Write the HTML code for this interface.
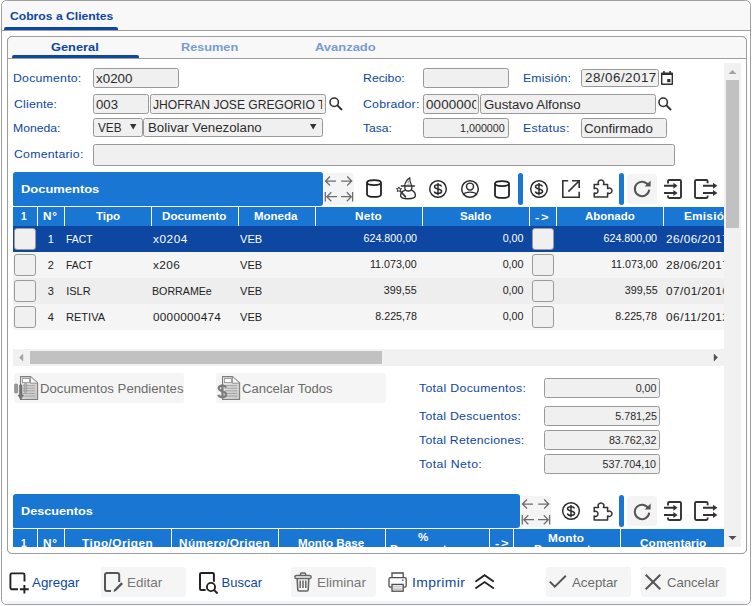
<!DOCTYPE html><html><head><meta charset="utf-8"><title>Cobros a Clientes</title><style>
html,body{margin:0;padding:0;background:#fff;}
body{width:754px;height:606px;position:relative;overflow:hidden;font-family:"Liberation Sans", sans-serif;}
div,span,svg{box-sizing:border-box;} .a{position:absolute;} svg{position:absolute;overflow:visible;}
</style></head><body>
<div class="a" style="left:1px;top:0px;width:750px;height:605px;border:1px solid #9e9e9e;border-radius:5.5px;background:#fff;"></div>
<div class="a" style="left:5px;top:601px;width:742px;height:3px;background:#f1f4f8;"></div>
<div class="a" style="left:2px;top:1px;width:748px;height:29px;background:#f8f8f8;border-radius:5px 5px 0 0;"></div>
<div class="a" style="left:2px;top:30px;width:748px;height:1px;background:#9e9e9e;"></div>
<div class="a" style="left:4px;top:27px;width:114px;height:3px;background:#0d47a1;border-radius:2px 2px 0 0;"></div>
<div class="a" style="left:7px;top:36px;width:740px;height:518px;border:1px solid #9e9e9e;border-radius:5px;background:#fff;"></div>
<div class="a" style="left:8px;top:37px;width:738px;height:21px;background:#f8f8f8;border-radius:4px 4px 0 0;"></div>
<div class="a" style="left:8px;top:58px;width:738px;height:1px;background:#9e9e9e;"></div>
<div class="a" style="left:12px;top:55px;width:127px;height:3px;background:#0d47a1;border-radius:2px 2px 0 0;"></div>
<div class="a" style="left:93px;top:68px;width:86px;height:20px;border:1px solid #999;border-radius:2.5px;background:#f0f0f0;"></div>
<div class="a" style="left:93px;top:94px;width:56px;height:20px;border:1px solid #999;border-radius:2.5px;background:#f0f0f0;"></div>
<div class="a" style="left:150px;top:94px;width:176px;height:20px;border:1px solid #999;border-radius:2.5px;background:#f0f0f0;"></div>
<div class="a" style="left:93px;top:118px;width:50px;height:19px;border:1px solid #999;border-radius:2.5px;background:#f0f0f0;"></div>
<div class="a" style="left:143px;top:118px;width:180px;height:19px;border:1px solid #999;border-radius:2.5px;background:#f0f0f0;"></div>
<div class="a" style="left:93px;top:144px;width:582px;height:22px;border:1px solid #999;border-radius:2.5px;background:#f0f0f0;"></div>
<div class="a" style="left:423px;top:68px;width:86px;height:20px;border:1px solid #999;border-radius:2.5px;background:#f0f0f0;"></div>
<div class="a" style="left:423px;top:94px;width:56px;height:20px;border:1px solid #999;border-radius:2.5px;background:#f0f0f0;"></div>
<div class="a" style="left:480px;top:94px;width:176px;height:20px;border:1px solid #999;border-radius:2.5px;background:#f0f0f0;"></div>
<div class="a" style="left:423px;top:118px;width:86px;height:20px;border:1px solid #999;border-radius:2.5px;background:#f0f0f0;"></div>
<div class="a" style="left:581px;top:69px;width:78px;height:18px;border:1px solid #999;border-radius:2.5px;background:#f0f0f0;"></div>
<div class="a" style="left:581px;top:118px;width:86px;height:20px;border:1px solid #999;border-radius:2.5px;background:#f0f0f0;"></div>
<div class="a" style="left:13px;top:172px;width:310px;height:34px;background:#1976d2;border-radius:3px 3px 3px 1px;"></div>
<div class="a" style="left:13px;top:207px;width:711px;height:19px;background:#1976d2;"></div>
<div class="a" style="left:37px;top:207px;width:1px;height:19px;background:#fff;"></div>
<div class="a" style="left:64px;top:207px;width:1px;height:19px;background:#fff;"></div>
<div class="a" style="left:151px;top:207px;width:1px;height:19px;background:#fff;"></div>
<div class="a" style="left:238px;top:207px;width:1px;height:19px;background:#fff;"></div>
<div class="a" style="left:315px;top:207px;width:1px;height:19px;background:#fff;"></div>
<div class="a" style="left:422px;top:207px;width:1px;height:19px;background:#fff;"></div>
<div class="a" style="left:529px;top:207px;width:1px;height:19px;background:#fff;"></div>
<div class="a" style="left:556px;top:207px;width:1px;height:19px;background:#fff;"></div>
<div class="a" style="left:663px;top:207px;width:1px;height:19px;background:#fff;"></div>
<div class="a" style="left:13px;top:226px;width:711px;height:26px;background:#0d47a1;"></div>
<div class="a" style="left:14px;top:228px;width:22px;height:22px;border:1px solid #9a9a9a;border-radius:3px;background:#f0f0f0;"></div>
<div class="a" style="left:532px;top:228px;width:22px;height:22px;border:1px solid #9a9a9a;border-radius:3px;background:#f0f0f0;"></div>
<div class="a" style="left:13px;top:252px;width:711px;height:26px;background:#f5f5f5;"></div>
<div class="a" style="left:14px;top:254px;width:22px;height:22px;border:1px solid #9a9a9a;border-radius:3px;background:#f0f0f0;"></div>
<div class="a" style="left:532px;top:254px;width:22px;height:22px;border:1px solid #9a9a9a;border-radius:3px;background:#f0f0f0;"></div>
<div class="a" style="left:13px;top:278px;width:711px;height:26px;background:#eeeeee;"></div>
<div class="a" style="left:14px;top:280px;width:22px;height:22px;border:1px solid #9a9a9a;border-radius:3px;background:#f0f0f0;"></div>
<div class="a" style="left:532px;top:280px;width:22px;height:22px;border:1px solid #9a9a9a;border-radius:3px;background:#f0f0f0;"></div>
<div class="a" style="left:13px;top:304px;width:711px;height:26px;background:#f5f5f5;"></div>
<div class="a" style="left:14px;top:306px;width:22px;height:22px;border:1px solid #9a9a9a;border-radius:3px;background:#f0f0f0;"></div>
<div class="a" style="left:532px;top:306px;width:22px;height:22px;border:1px solid #9a9a9a;border-radius:3px;background:#f0f0f0;"></div>
<div class="a" style="left:324px;top:173px;width:30px;height:32px;background:#f4f4f4;border-radius:3px;"></div>
<div class="a" style="left:627px;top:174px;width:30px;height:30px;background:#f4f4f4;border-radius:3px;"></div>
<div class="a" style="left:518px;top:173px;width:5px;height:32px;background:#1976d2;border-radius:2.5px;"></div>
<div class="a" style="left:619px;top:173px;width:5px;height:32px;background:#1976d2;border-radius:2.5px;"></div>
<div class="a" style="left:13px;top:349px;width:711px;height:17px;background:#f1f1f1;"></div>
<div class="a" style="left:30px;top:351px;width:352px;height:13px;background:#c1c1c1;"></div>
<div class="a" style="left:14px;top:373px;width:170px;height:30px;background:#f5f5f5;border-radius:3px;"></div>
<div class="a" style="left:216px;top:373px;width:170px;height:30px;background:#f5f5f5;border-radius:3px;"></div>
<div class="a" style="left:544px;top:378px;width:116px;height:20px;border:1px solid #999;border-radius:2.5px;background:#f0f0f0;"></div>
<div class="a" style="left:544px;top:406px;width:116px;height:20px;border:1px solid #999;border-radius:2.5px;background:#f0f0f0;"></div>
<div class="a" style="left:544px;top:430px;width:116px;height:20px;border:1px solid #999;border-radius:2.5px;background:#f0f0f0;"></div>
<div class="a" style="left:544px;top:454px;width:116px;height:20px;border:1px solid #999;border-radius:2.5px;background:#f0f0f0;"></div>
<div class="a" style="left:13px;top:494px;width:507px;height:34px;background:#1976d2;border-radius:3px 3px 3px 1px;"></div>
<div class="a" style="left:13px;top:529px;width:711px;height:18px;background:#1976d2;"></div>
<div class="a" style="left:37px;top:529px;width:1px;height:18px;background:#fff;"></div>
<div class="a" style="left:64px;top:529px;width:1px;height:18px;background:#fff;"></div>
<div class="a" style="left:171px;top:529px;width:1px;height:18px;background:#fff;"></div>
<div class="a" style="left:278px;top:529px;width:1px;height:18px;background:#fff;"></div>
<div class="a" style="left:385px;top:529px;width:1px;height:18px;background:#fff;"></div>
<div class="a" style="left:489px;top:529px;width:1px;height:18px;background:#fff;"></div>
<div class="a" style="left:513px;top:529px;width:1px;height:18px;background:#fff;"></div>
<div class="a" style="left:620px;top:529px;width:1px;height:18px;background:#fff;"></div>
<div class="a" style="left:521px;top:496px;width:30px;height:31px;background:#f4f4f4;border-radius:3px;"></div>
<div class="a" style="left:627px;top:496px;width:30px;height:30px;background:#f4f4f4;border-radius:3px;"></div>
<div class="a" style="left:619px;top:495px;width:5px;height:32px;background:#1976d2;border-radius:2.5px;"></div>
<div class="a" style="left:101px;top:567px;width:85px;height:30px;background:#f5f5f5;border-radius:3px;"></div>
<div class="a" style="left:291px;top:567px;width:85px;height:30px;background:#f5f5f5;border-radius:3px;"></div>
<div class="a" style="left:546px;top:567px;width:85px;height:30px;background:#f5f5f5;border-radius:3px;"></div>
<div class="a" style="left:641px;top:567px;width:85px;height:30px;background:#f5f5f5;border-radius:3px;"></div>
<svg style="left:324px;top:173px" width="31" height="32" viewBox="0 0 31 32"><path d="M12 8 H1.6 M6 3.5 L1.5 8 L6 12.5 M17.2 8 H27.6 M23.2 3.5 L27.7 8 L23.2 12.5 M1.3 19 V28.4 M13 23.7 H3 M7.3 19.2 L2.8 23.7 L7.3 28.2 M17 23.7 H27.2 M22.8 19.2 L27.3 23.7 L22.8 28.2 M28.6 19 V28.4" fill="none" stroke="#6c6c6c" stroke-width="1.25" stroke-linecap="butt" stroke-linejoin="miter"/></svg>
<svg style="left:366px;top:179.3px" width="16" height="19" viewBox="0 0 16 19"><path d="M1 3.6 C1 0.2 15 0.2 15 3.6 V15.4 C15 18.8 1 18.8 1 15.4 Z M1 3.6 C1 7 15 7 15 3.6" fill="none" stroke="#222" stroke-width="1.8"/></svg>
<svg style="left:396px;top:177px" width="20" height="23" viewBox="0 0 20 23"><path d="M8.6 8.8 C9.2 5.6 10.8 2.6 13.8 0.7 C13.4 3.4 14.4 6.4 15.6 8.8" fill="none" stroke="#2e2e2e" stroke-width="1.2" stroke-linejoin="round" stroke-linecap="round"/><path d="M11.6 5.4 L12.4 3.6 L12.8 6.6 M11 7.4 H13.6" fill="none" stroke="#9a9a9a" stroke-width="0.8"/><path d="M5.4 8.9 H18.4" stroke="#2e2e2e" stroke-width="1.5" stroke-linecap="round"/><path d="M8.9 9.4 V11 C8.9 12.8 10.4 14 12.3 14 C14.2 14 15.8 12.8 15.8 11 V9.4" fill="none" stroke="#2e2e2e" stroke-width="1.3"/><path d="M8.8 13.4 C6.4 14.2 4.6 16 4.6 18.6 C4.6 20.6 8 21.8 12 21.8 C16 21.8 19.4 20.6 19.4 18.6 C19.4 16 17.8 14.2 15.8 13.4" fill="none" stroke="#2e2e2e" stroke-width="1.4" stroke-linecap="round"/><path d="M4.2 14 L9.4 19.6" stroke="#2e2e2e" stroke-width="1.6" stroke-linecap="round"/><path d="M2.9 9.9 L3.6 11.7 L5.5 11.7 L4 12.9 L4.6 14.8 L2.9 13.7 L1.2 14.8 L1.8 12.9 L0.3 11.7 L2.2 11.7 Z" fill="#fff" stroke="#2e2e2e" stroke-width="0.95" stroke-linejoin="round"/></svg>
<svg style="left:427.8px;top:178.7px" width="20" height="20" viewBox="0 0 20 20"><circle cx="10" cy="10" r="8.3" fill="none" stroke="#2a2a2a" stroke-width="1.45"/><path d="M13 7.6 C12.6 6.4 11.4 5.9 10 5.9 C8.3 5.9 7.1 6.7 7.1 7.9 C7.1 9.2 8.4 9.6 10 10 C11.7 10.4 13 10.9 13 12.2 C13 13.4 11.7 14.2 10 14.2 C8.4 14.2 7.2 13.5 6.9 12.3 M10 4.3 V15.8" fill="none" stroke="#2a2a2a" stroke-width="1.45" vector-effect="non-scaling-stroke" transform="translate(10 10) scale(1.2 1.06) translate(-10 -10)"/></svg>
<svg style="left:459.8px;top:178.7px" width="20" height="20" viewBox="0 0 20 20"><circle cx="10" cy="10" r="8.3" fill="none" stroke="#2a2a2a" stroke-width="1.45"/><circle cx="10" cy="7.6" r="3.5" fill="none" stroke="#2a2a2a" stroke-width="1.45"/><path d="M3.2 15.9 C5.2 12.2 14.8 12.2 16.8 15.9" fill="none" stroke="#2a2a2a" stroke-width="1.45"/></svg>
<svg style="left:494px;top:179.5px" width="16" height="19" viewBox="0 0 16 19"><path d="M1 3.6 C1 0.2 15 0.2 15 3.6 V15.4 C15 18.8 1 18.8 1 15.4 Z M1 3.6 C1 7 15 7 15 3.6" fill="none" stroke="#222" stroke-width="1.8"/></svg>
<svg style="left:528.9px;top:178.7px" width="20" height="20" viewBox="0 0 20 20"><circle cx="10" cy="10" r="8.3" fill="none" stroke="#2a2a2a" stroke-width="1.45"/><path d="M13 7.6 C12.6 6.4 11.4 5.9 10 5.9 C8.3 5.9 7.1 6.7 7.1 7.9 C7.1 9.2 8.4 9.6 10 10 C11.7 10.4 13 10.9 13 12.2 C13 13.4 11.7 14.2 10 14.2 C8.4 14.2 7.2 13.5 6.9 12.3 M10 4.3 V15.8" fill="none" stroke="#2a2a2a" stroke-width="1.45" vector-effect="non-scaling-stroke" transform="translate(10 10) scale(1.2 1.06) translate(-10 -10)"/></svg>
<svg style="left:562px;top:179.8px" width="18" height="18" viewBox="0 0 18 18"><path d="M6.2 0.8 H0.8 V17.2 H17.2 V11.8 M10 0.8 H17.2 V8 M17 1 L6.4 11.6" fill="none" stroke="#333" stroke-width="1.6"/></svg>
<svg style="left:593px;top:178.9px" width="20" height="19" viewBox="0 0 20 19"><path d="M1.2 5.6 H5.6 C4.4 3.4 5.6 0.9 8 0.9 C10.4 0.9 11.6 3.4 10.4 5.6 H14.6 V9.6 C16.6 8.4 19 9.6 19 11.8 C19 14 16.6 15.2 14.6 14 V18 H1.2 V14 C3.4 15 5 13.8 5 11.8 C5 9.8 3.4 8.6 1.2 9.6 Z" fill="none" stroke="#333" stroke-width="1.5" stroke-linejoin="round"/></svg>
<svg style="left:631.8px;top:179.2px" width="20" height="20" viewBox="0 0 20 20"><path d="M16.2 6.2 A7.2 7.2 0 1 0 17.2 10.6" fill="none" stroke="#555" stroke-width="2"/><path d="M18.6 1.6 V7.6 H12.6 Z" fill="#555"/></svg>
<svg style="left:663.8px;top:178.8px" width="18" height="20" viewBox="0 0 18 20"><path d="M4 4.6 V2.2 Q4 1 5.2 1 H15.8 Q17 1 17 2.2 V17.8 Q17 19 15.8 19 H5.2 Q4 19 4 17.8 V16.4" fill="none" stroke="#333" stroke-width="1.9"/><path d="M0 6.8 H10 M0 14 H10" stroke="#333" stroke-width="1.9"/><path d="M9.4 3.8 L13.6 6.8 L9.4 9.8 Z M9.4 11 L13.6 14 L9.4 17 Z" fill="#333"/></svg>
<svg style="left:694.2px;top:178.8px" width="24" height="20" viewBox="0 0 24 20"><path d="M13.6 4.2 V2.2 Q13.6 1 12.4 1 H2.2 Q1 1 1 2.2 V17.8 Q1 19 2.2 19 H12.4 Q13.6 19 13.6 17.8 V16.6" fill="none" stroke="#333" stroke-width="1.9"/><path d="M9 6.8 H20 M9 14 H20" stroke="#333" stroke-width="1.9"/><path d="M19 3.8 L23.4 6.8 L19 9.8 Z M19 11 L23.4 14 L19 17 Z" fill="#333"/></svg>
<svg style="left:521px;top:495.5px" width="31" height="32" viewBox="0 0 31 32"><path d="M12 8 H1.6 M6 3.5 L1.5 8 L6 12.5 M17.2 8 H27.6 M23.2 3.5 L27.7 8 L23.2 12.5 M1.3 19 V28.4 M13 23.7 H3 M7.3 19.2 L2.8 23.7 L7.3 28.2 M17 23.7 H27.2 M22.8 19.2 L27.3 23.7 L22.8 28.2 M28.6 19 V28.4" fill="none" stroke="#6c6c6c" stroke-width="1.25" stroke-linecap="butt" stroke-linejoin="miter"/></svg>
<svg style="left:560.7px;top:501.2px" width="20" height="20" viewBox="0 0 20 20"><circle cx="10" cy="10" r="8.3" fill="none" stroke="#2a2a2a" stroke-width="1.45"/><path d="M13 7.6 C12.6 6.4 11.4 5.9 10 5.9 C8.3 5.9 7.1 6.7 7.1 7.9 C7.1 9.2 8.4 9.6 10 10 C11.7 10.4 13 10.9 13 12.2 C13 13.4 11.7 14.2 10 14.2 C8.4 14.2 7.2 13.5 6.9 12.3 M10 4.3 V15.8" fill="none" stroke="#2a2a2a" stroke-width="1.45" vector-effect="non-scaling-stroke" transform="translate(10 10) scale(1.2 1.06) translate(-10 -10)"/></svg>
<svg style="left:593px;top:501.5px" width="20" height="19" viewBox="0 0 20 19"><path d="M1.2 5.6 H5.6 C4.4 3.4 5.6 0.9 8 0.9 C10.4 0.9 11.6 3.4 10.4 5.6 H14.6 V9.6 C16.6 8.4 19 9.6 19 11.8 C19 14 16.6 15.2 14.6 14 V18 H1.2 V14 C3.4 15 5 13.8 5 11.8 C5 9.8 3.4 8.6 1.2 9.6 Z" fill="none" stroke="#333" stroke-width="1.5" stroke-linejoin="round"/></svg>
<svg style="left:631.8px;top:501.6px" width="20" height="20" viewBox="0 0 20 20"><path d="M16.2 6.2 A7.2 7.2 0 1 0 17.2 10.6" fill="none" stroke="#555" stroke-width="2"/><path d="M18.6 1.6 V7.6 H12.6 Z" fill="#555"/></svg>
<svg style="left:663.8px;top:501.2px" width="18" height="20" viewBox="0 0 18 20"><path d="M4 4.6 V2.2 Q4 1 5.2 1 H15.8 Q17 1 17 2.2 V17.8 Q17 19 15.8 19 H5.2 Q4 19 4 17.8 V16.4" fill="none" stroke="#333" stroke-width="1.9"/><path d="M0 6.8 H10 M0 14 H10" stroke="#333" stroke-width="1.9"/><path d="M9.4 3.8 L13.6 6.8 L9.4 9.8 Z M9.4 11 L13.6 14 L9.4 17 Z" fill="#333"/></svg>
<svg style="left:694.2px;top:501.2px" width="24" height="20" viewBox="0 0 24 20"><path d="M13.6 4.2 V2.2 Q13.6 1 12.4 1 H2.2 Q1 1 1 2.2 V17.8 Q1 19 2.2 19 H12.4 Q13.6 19 13.6 17.8 V16.6" fill="none" stroke="#333" stroke-width="1.9"/><path d="M9 6.8 H20 M9 14 H20" stroke="#333" stroke-width="1.9"/><path d="M19 3.8 L23.4 6.8 L19 9.8 Z M19 11 L23.4 14 L19 17 Z" fill="#333"/></svg>
<svg style="left:328.6px;top:97.4px" width="14" height="14" viewBox="0 0 14 14"><circle cx="5.2" cy="5.2" r="4.2" fill="none" stroke="#2e2e2e" stroke-width="1.55"/><path d="M8.2 8.2 L13 13" stroke="#2e2e2e" stroke-width="1.9"/></svg>
<svg style="left:658.4px;top:97.4px" width="14" height="14" viewBox="0 0 14 14"><circle cx="5.2" cy="5.2" r="4.2" fill="none" stroke="#2e2e2e" stroke-width="1.55"/><path d="M8.2 8.2 L13 13" stroke="#2e2e2e" stroke-width="1.9"/></svg>
<svg style="left:661px;top:71.4px" width="12" height="14" viewBox="0 0 12 14"><path d="M0 2.2 Q0 1.4 0.8 1.4 H11.2 Q12 1.4 12 2.2 V13.2 Q12 14 11.2 14 H0.8 Q0 14 0 13.2 Z M1.4 4.1 V12.6 H10.6 V4.1 Z" fill="#303030" fill-rule="evenodd"/><rect x="2.2" y="0" width="1.5" height="2.4" fill="#303030"/><rect x="8.3" y="0" width="1.5" height="2.4" fill="#303030"/><rect x="6.2" y="8" width="3.2" height="3.2" fill="#303030"/></svg>
<svg style="left:129.8px;top:124.2px" width="6.4" height="5.6" viewBox="0 0 6.4 5.6"><path d="M0 0 H6.4 L3.2 5.6 Z" fill="#333"/></svg>
<svg style="left:309.8px;top:124.2px" width="6.4" height="5.6" viewBox="0 0 6.4 5.6"><path d="M0 0 H6.4 L3.2 5.6 Z" fill="#333"/></svg>
<svg style="left:13px;top:349px" width="17" height="17" viewBox="0 0 17 17"><path d="M10.2 4.6 L6.2 8.5 L10.2 12.4 Z" fill="#a3a3a3"/></svg>
<svg style="left:707px;top:349px" width="17" height="17" viewBox="0 0 17 17"><path d="M6.8 4.6 L10.8 8.5 L6.8 12.4 Z" fill="#505050"/></svg>
<svg style="left:13.6px;top:376px" width="24" height="24" viewBox="0 0 24 24"><defs><linearGradient id="pgp" x1="0" y1="0" x2="1" y2="1"><stop offset="0" stop-color="#ececec"/><stop offset="1" stop-color="#c4c4c4"/></linearGradient></defs><path d="M6.5 0.6 H16.6 L23.6 7 V23.5 H6.5 Z" fill="url(#pgp)" stroke="#7d7d7d" stroke-width="1.1" stroke-linejoin="round"/><path d="M16.4 0.8 V7.2 H23.4" fill="#f4f4f4" stroke="#8a8a8a" stroke-width="0.9"/><rect x="8.4" y="2.6" width="7" height="4" fill="#fff" stroke="#8c8c8c" stroke-width="0.8"/><path d="M9 9.6 H21 M9 12.2 H21 M9 14.8 H21 M9 17.4 H21 M9 20 H21" stroke="#a0a0a0" stroke-width="1"/><rect x="0.6" y="8" width="3" height="9" rx="1" fill="#9a9a9a" stroke="#777" stroke-width="0.6"/><path d="M5.4 9.6 Q5.4 8.8 6.2 8.8 H7.2 Q8 8.8 8 9.6 V19 H9.4 L6.7 23.6 L4 19 H5.4 Z" fill="#777" stroke="#5f5f5f" stroke-width="0.5"/><rect x="10.2" y="7.4" width="2.6" height="9" rx="1" fill="#b5b5b5" stroke="#888" stroke-width="0.6"/></svg>
<svg style="left:215.7px;top:376px" width="24" height="24" viewBox="0 0 24 24"><defs><linearGradient id="pgc" x1="0" y1="0" x2="1" y2="1"><stop offset="0" stop-color="#ececec"/><stop offset="1" stop-color="#c4c4c4"/></linearGradient></defs><path d="M6.5 0.6 H16.6 L23.6 7 V23.5 H6.5 Z" fill="url(#pgc)" stroke="#7d7d7d" stroke-width="1.1" stroke-linejoin="round"/><path d="M16.4 0.8 V7.2 H23.4" fill="#f4f4f4" stroke="#8a8a8a" stroke-width="0.9"/><rect x="8.4" y="2.6" width="7" height="4" fill="#fff" stroke="#8c8c8c" stroke-width="0.8"/><path d="M9 9.6 H21 M9 12.2 H21 M9 14.8 H21 M9 17.4 H21 M9 20 H21" stroke="#a0a0a0" stroke-width="1"/><path d="M10 11.6 C9.4 10.2 8 9.6 6.4 9.6 C4 9.6 2.7 10.7 2.7 12.3 C2.7 14 4.4 14.6 6.4 15.2 C8.6 15.8 10.1 16.6 10.1 18.4 C10.1 20.1 8.6 21.1 6.4 21.1 C4.2 21.1 2.8 20.3 2.3 18.9 M6.4 8.2 V22.6" fill="none" stroke="#7c7c7c" stroke-width="2.2"/></svg>
<svg style="left:8.6px;top:572px" width="21" height="23" viewBox="0 0 21 23"><path d="M9 17.2 H2.8 Q1.4 17.2 1.4 15.8 V2.8 Q1.4 1.4 2.8 1.4 H14.1 Q15.5 1.4 15.5 2.8 V9.4" fill="none" stroke="#222" stroke-width="1.9"/><path d="M10.9 17.2 H19.7 M15.4 13 V21.5" stroke="#222" stroke-width="1.9"/></svg>
<svg style="left:104px;top:572px" width="20" height="22" viewBox="0 0 20 22"><path d="M7 19.1 H3 Q1 19.1 1 17.1 V3 Q1 1 3 1 H13.2 Q15.2 1 15.2 3 V10" fill="none" stroke="#555" stroke-width="2"/><path d="M9.5 19.9 L10.2 17.4 L17.3 10.3 L19 12 L11.9 19.1 Z" fill="#555"/></svg>
<svg style="left:199px;top:572px" width="20" height="23" viewBox="0 0 20 23"><path d="M6.6 17.9 H2.2 Q1 17.9 1 16.7 V2.2 Q1 1 2.2 1 H13.7 Q14.9 1 14.9 2.2 V9.7" fill="none" stroke="#222" stroke-width="2"/><circle cx="12" cy="15" r="4.1" fill="none" stroke="#222" stroke-width="1.9"/><path d="M15 18 L18.6 21.4" stroke="#222" stroke-width="2"/></svg>
<svg style="left:294px;top:572.2px" width="18" height="20" viewBox="0 0 18 20"><rect x="0.9" y="3.4" width="16.2" height="3.2" rx="1.6" fill="none" stroke="#666" stroke-width="1.5"/><path d="M6.4 3.2 V2 Q6.4 0.9 7.5 0.9 H10.5 Q11.6 0.9 11.6 2 V3.2" fill="none" stroke="#666" stroke-width="1.5"/><path d="M3.2 6.8 L3.8 17.8 Q3.9 19 5.1 19 H12.9 Q14.1 19 14.2 17.8 L14.8 6.8" fill="none" stroke="#666" stroke-width="1.6"/><path d="M6.2 8.6 V16 M9 8.6 V16 M11.8 8.6 V16" stroke="#666" stroke-width="1.5"/></svg>
<svg style="left:388.4px;top:572px" width="19" height="20" viewBox="0 0 19 20"><path d="M4 5.4 V1 H15.2 V5.4" fill="none" stroke="#4d4d4d" stroke-width="1.3"/><path d="M3.8 15.2 H2.6 Q1 15.2 1 13.6 V7.2 Q1 5.6 2.6 5.6 H16.6 Q18.2 5.6 18.2 7.2 V13.6 Q18.2 15.2 16.6 15.2 H15.4" fill="none" stroke="#4d4d4d" stroke-width="1.3"/><rect x="4" y="12.4" width="11.2" height="6.8" fill="#f1f1f1" stroke="#4d4d4d" stroke-width="1.3"/><path d="M5 14.6 H14.2 M5 16.2 H14.2 M5 17.6 H14.2" stroke="#c4c4c4" stroke-width="0.9"/><rect x="14.2" y="7.4" width="1.2" height="1.6" fill="#4d4d4d"/></svg>
<svg style="left:474.6px;top:574.4px" width="19" height="15" viewBox="0 0 19 15"><path d="M1 7.2 L9.6 1.2 L18.2 7.2 M1 14 L9.6 8 L18.2 14" fill="none" stroke="#222" stroke-width="1.8" stroke-linecap="round" stroke-linejoin="miter"/></svg>
<svg style="left:549.2px;top:575.2px" width="18" height="13" viewBox="0 0 18 13"><path d="M0.8 6.6 L5.8 11.6 L16.8 0.8" fill="none" stroke="#555" stroke-width="2"/></svg>
<svg style="left:645.2px;top:574.2px" width="16" height="16" viewBox="0 0 16 16"><path d="M0.7 0.7 L15.3 15.3 M15.3 0.7 L0.7 15.3" fill="none" stroke="#555" stroke-width="2"/></svg>
<span style="position:absolute;white-space:pre;line-height:11.3px;font-size:11.3px;color:#0d47a1;top:11.23px;font-weight:bold;letter-spacing:0.000px;left:9.80px;transform-origin:0 50%;transform:scaleX(1.0755);">Cobros a Clientes</span>
<span style="position:absolute;white-space:pre;line-height:11.3px;font-size:11.3px;color:#0d47a1;top:41.83px;font-weight:bold;letter-spacing:0.000px;left:51.40px;transform-origin:0 50%;transform:scaleX(1.1336);">General</span>
<span style="position:absolute;white-space:pre;line-height:11.3px;font-size:11.3px;color:#789cd3;top:41.83px;font-weight:bold;letter-spacing:0.000px;left:180.60px;transform-origin:0 50%;transform:scaleX(1.1247);">Resumen</span>
<span style="position:absolute;white-space:pre;line-height:11.3px;font-size:11.3px;color:#789cd3;top:41.83px;font-weight:bold;letter-spacing:0.000px;left:314.60px;transform-origin:0 50%;transform:scaleX(1.1466);">Avanzado</span>
<span style="position:absolute;white-space:pre;line-height:11.5px;font-size:11.5px;color:#0d47a1;top:72.87px;letter-spacing:0.202px;left:13.20px;transform-origin:0 50%;transform:scaleX(1.0700);">Documento:</span>
<span style="position:absolute;white-space:pre;line-height:11.5px;font-size:11.5px;color:#0d47a1;top:99.17px;letter-spacing:0.170px;left:13.80px;transform-origin:0 50%;transform:scaleX(1.0700);">Cliente:</span>
<span style="position:absolute;white-space:pre;line-height:11.5px;font-size:11.5px;color:#0d47a1;top:123.07px;letter-spacing:0.000px;left:13.20px;transform-origin:0 50%;transform:scaleX(1.0611);">Moneda:</span>
<span style="position:absolute;white-space:pre;line-height:11.5px;font-size:11.5px;color:#0d47a1;top:149.47px;letter-spacing:0.213px;left:13.80px;transform-origin:0 50%;transform:scaleX(1.0700);">Comentario:</span>
<span style="position:absolute;white-space:pre;line-height:11.5px;font-size:11.5px;color:#0d47a1;top:72.87px;letter-spacing:0.000px;left:362.60px;transform-origin:0 50%;transform:scaleX(1.0692);">Recibo:</span>
<span style="position:absolute;white-space:pre;line-height:11.5px;font-size:11.5px;color:#0d47a1;top:99.17px;letter-spacing:0.185px;left:363.20px;transform-origin:0 50%;transform:scaleX(1.0700);">Cobrador:</span>
<span style="position:absolute;white-space:pre;line-height:11.5px;font-size:11.5px;color:#0d47a1;top:123.07px;letter-spacing:0.000px;left:363.20px;transform-origin:0 50%;transform:scaleX(1.0509);">Tasa:</span>
<span style="position:absolute;white-space:pre;line-height:11.5px;font-size:11.5px;color:#0d47a1;top:72.87px;letter-spacing:0.107px;left:522.80px;transform-origin:0 50%;transform:scaleX(1.0700);">Emisión:</span>
<span style="position:absolute;white-space:pre;line-height:11.5px;font-size:11.5px;color:#0d47a1;top:123.07px;letter-spacing:0.257px;left:522.80px;transform-origin:0 50%;transform:scaleX(1.0700);">Estatus:</span>
<span style="position:absolute;white-space:pre;line-height:12.5px;font-size:12.5px;color:#2b2b2b;top:72.82px;letter-spacing:0.012px;left:96.40px;transform-origin:0 50%;transform:scaleX(1.0700);">x0200</span>
<span style="position:absolute;white-space:pre;line-height:12.5px;font-size:12.5px;color:#2b2b2b;top:98.82px;letter-spacing:0.000px;left:96.40px;transform-origin:0 50%;transform:scaleX(1.0547);">003</span>
<span style="position:absolute;white-space:pre;line-height:12.5px;font-size:12.5px;color:#2b2b2b;top:98.82px;letter-spacing:0.000px;left:153.30px;transform-origin:0 50%;transform:scaleX(0.9666);width:175.36px;overflow:hidden;">JHOFRAN JOSE GREGORIO TORRES</span>
<span style="position:absolute;white-space:pre;line-height:12.5px;font-size:12.5px;color:#2b2b2b;top:121.82px;letter-spacing:0.000px;left:98.00px;transform-origin:0 50%;transform:scaleX(0.9434);">VEB</span>
<span style="position:absolute;white-space:pre;line-height:12.5px;font-size:12.5px;color:#2b2b2b;top:121.82px;letter-spacing:0.000px;left:147.80px;transform-origin:0 50%;transform:scaleX(1.0623);">Bolivar Venezolano</span>
<span style="position:absolute;white-space:pre;line-height:12.5px;font-size:12.5px;color:#2b2b2b;top:98.82px;letter-spacing:0.125px;left:426.10px;transform-origin:0 50%;transform:scaleX(1.0700);width:47.38px;overflow:hidden;">0000000001</span>
<span style="position:absolute;white-space:pre;line-height:12.5px;font-size:12.5px;color:#2b2b2b;top:98.82px;letter-spacing:0.000px;left:483.60px;transform-origin:0 50%;transform:scaleX(1.0601);">Gustavo Alfonso</span>
<span style="position:absolute;white-space:pre;line-height:10px;font-size:10px;color:#2b2b2b;top:123.53px;letter-spacing:0.000px;right:249.00px;transform-origin:100% 50%;transform:scaleX(1.0700);">1,000000</span>
<span style="position:absolute;white-space:pre;line-height:12.5px;font-size:12.5px;color:#2b2b2b;top:72.42px;letter-spacing:0.453px;left:584.80px;transform-origin:0 50%;transform:scaleX(1.0700);">28/06/2017</span>
<span style="position:absolute;white-space:pre;line-height:12.5px;font-size:12.5px;color:#2b2b2b;top:122.62px;letter-spacing:0.000px;left:584.20px;transform-origin:0 50%;transform:scaleX(1.0662);">Confirmado</span>
<span style="position:absolute;white-space:pre;line-height:11.3px;font-size:11.3px;color:#fff;top:183.63px;font-weight:bold;letter-spacing:0.000px;left:20.70px;transform-origin:0 50%;transform:scaleX(1.1444);">Documentos</span>
<span style="position:absolute;white-space:pre;line-height:10px;font-size:10px;color:#fff;top:212.34px;font-weight:bold;letter-spacing:0.000px;left:20.50px;transform-origin:0 50%;transform:scaleX(1.0067);">1</span>
<span style="position:absolute;white-space:pre;line-height:10px;font-size:10px;color:#fff;top:212.34px;font-weight:bold;letter-spacing:0.715px;left:42.80px;transform-origin:0 50%;transform:scaleX(1.1800);">N°</span>
<span style="position:absolute;white-space:pre;line-height:10px;font-size:10px;color:#fff;top:212.34px;font-weight:bold;letter-spacing:0.000px;left:95.50px;transform-origin:0 50%;transform:scaleX(1.1558);">Tipo</span>
<span style="position:absolute;white-space:pre;line-height:10px;font-size:10px;color:#fff;top:212.34px;font-weight:bold;letter-spacing:0.000px;left:161.70px;transform-origin:0 50%;transform:scaleX(1.1709);">Documento</span>
<span style="position:absolute;white-space:pre;line-height:10px;font-size:10px;color:#fff;top:212.34px;font-weight:bold;letter-spacing:0.000px;left:254.00px;transform-origin:0 50%;transform:scaleX(1.1487);">Moneda</span>
<span style="position:absolute;white-space:pre;line-height:10px;font-size:10px;color:#fff;top:212.34px;font-weight:bold;letter-spacing:0.131px;left:354.80px;transform-origin:0 50%;transform:scaleX(1.1800);">Neto</span>
<span style="position:absolute;white-space:pre;line-height:10px;font-size:10px;color:#fff;top:212.34px;font-weight:bold;letter-spacing:0.000px;left:459.80px;transform-origin:0 50%;transform:scaleX(1.1493);">Saldo</span>
<span style="position:absolute;white-space:pre;line-height:11px;font-size:11px;color:#fff;top:211.69px;font-weight:bold;letter-spacing:1.516px;left:535.40px;transform-origin:0 50%;transform:scaleX(1.1800);">-&gt;</span>
<span style="position:absolute;white-space:pre;line-height:10px;font-size:10px;color:#fff;top:212.34px;font-weight:bold;letter-spacing:0.000px;left:584.70px;transform-origin:0 50%;transform:scaleX(1.1471);">Abonado</span>
<span style="position:absolute;white-space:pre;line-height:10px;font-size:10px;color:#fff;top:212.34px;font-weight:bold;letter-spacing:0.196px;left:683.50px;transform-origin:0 50%;transform:scaleX(1.1800);width:33.64px;overflow:hidden;">Emisión</span>
<span style="position:absolute;white-space:pre;line-height:11px;font-size:11px;color:#fff;top:234.29px;letter-spacing:0.000px;left:47.80px;transform-origin:0 50%;">1</span>
<span style="position:absolute;white-space:pre;line-height:11px;font-size:11px;color:#fff;top:234.29px;letter-spacing:0.000px;left:66.20px;transform-origin:0 50%;transform:scaleX(0.9422);">FACT</span>
<span style="position:absolute;white-space:pre;line-height:11px;font-size:11px;color:#fff;top:234.29px;letter-spacing:0.518px;left:152.80px;transform-origin:0 50%;transform:scaleX(1.0700);">x0204</span>
<span style="position:absolute;white-space:pre;line-height:11px;font-size:11px;color:#fff;top:234.29px;letter-spacing:0.000px;left:239.80px;transform-origin:0 50%;transform:scaleX(1.0084);">VEB</span>
<span style="position:absolute;white-space:pre;line-height:10px;font-size:10px;color:#fff;top:233.53px;letter-spacing:0.000px;right:337.30px;transform-origin:100% 50%;transform:scaleX(1.0700);">624.800,00</span>
<span style="position:absolute;white-space:pre;line-height:10px;font-size:10px;color:#fff;top:233.53px;letter-spacing:0.000px;right:230.60px;transform-origin:100% 50%;transform:scaleX(1.0700);">0,00</span>
<span style="position:absolute;white-space:pre;line-height:10px;font-size:10px;color:#fff;top:233.53px;letter-spacing:0.000px;right:96.60px;transform-origin:100% 50%;transform:scaleX(1.0700);">624.800,00</span>
<span style="position:absolute;white-space:pre;line-height:11px;font-size:11px;color:#fff;top:234.29px;letter-spacing:0.402px;left:665.50px;transform-origin:0 50%;transform:scaleX(1.0700);width:54.49px;overflow:hidden;">26/06/2017</span>
<span style="position:absolute;white-space:pre;line-height:11px;font-size:11px;color:#222;top:260.29px;letter-spacing:0.000px;left:47.80px;transform-origin:0 50%;">2</span>
<span style="position:absolute;white-space:pre;line-height:11px;font-size:11px;color:#222;top:260.29px;letter-spacing:0.000px;left:66.20px;transform-origin:0 50%;transform:scaleX(0.9422);">FACT</span>
<span style="position:absolute;white-space:pre;line-height:11px;font-size:11px;color:#222;top:260.29px;letter-spacing:0.365px;left:152.80px;transform-origin:0 50%;transform:scaleX(1.0700);">x206</span>
<span style="position:absolute;white-space:pre;line-height:11px;font-size:11px;color:#222;top:260.29px;letter-spacing:0.000px;left:239.80px;transform-origin:0 50%;transform:scaleX(1.0084);">VEB</span>
<span style="position:absolute;white-space:pre;line-height:10px;font-size:10px;color:#222;top:259.54px;letter-spacing:0.000px;right:337.30px;transform-origin:100% 50%;transform:scaleX(1.0700);">11.073,00</span>
<span style="position:absolute;white-space:pre;line-height:10px;font-size:10px;color:#222;top:259.54px;letter-spacing:0.000px;right:230.60px;transform-origin:100% 50%;transform:scaleX(1.0700);">0,00</span>
<span style="position:absolute;white-space:pre;line-height:10px;font-size:10px;color:#222;top:259.54px;letter-spacing:0.000px;right:96.60px;transform-origin:100% 50%;transform:scaleX(1.0700);">11.073,00</span>
<span style="position:absolute;white-space:pre;line-height:11px;font-size:11px;color:#222;top:260.29px;letter-spacing:0.402px;left:665.50px;transform-origin:0 50%;transform:scaleX(1.0700);width:54.49px;overflow:hidden;">28/06/2017</span>
<span style="position:absolute;white-space:pre;line-height:11px;font-size:11px;color:#222;top:286.29px;letter-spacing:0.000px;left:47.80px;transform-origin:0 50%;">3</span>
<span style="position:absolute;white-space:pre;line-height:11px;font-size:11px;color:#222;top:286.29px;letter-spacing:0.000px;left:66.20px;transform-origin:0 50%;">ISLR</span>
<span style="position:absolute;white-space:pre;line-height:11px;font-size:11px;color:#222;top:286.29px;letter-spacing:0.000px;left:152.20px;transform-origin:0 50%;transform:scaleX(0.9684);">BORRAMEe</span>
<span style="position:absolute;white-space:pre;line-height:11px;font-size:11px;color:#222;top:286.29px;letter-spacing:0.000px;left:239.80px;transform-origin:0 50%;transform:scaleX(1.0084);">VEB</span>
<span style="position:absolute;white-space:pre;line-height:10px;font-size:10px;color:#222;top:285.54px;letter-spacing:0.000px;right:337.30px;transform-origin:100% 50%;transform:scaleX(1.0700);">399,55</span>
<span style="position:absolute;white-space:pre;line-height:10px;font-size:10px;color:#222;top:285.54px;letter-spacing:0.000px;right:230.60px;transform-origin:100% 50%;transform:scaleX(1.0700);">0,00</span>
<span style="position:absolute;white-space:pre;line-height:10px;font-size:10px;color:#222;top:285.54px;letter-spacing:0.000px;right:96.60px;transform-origin:100% 50%;transform:scaleX(1.0700);">399,55</span>
<span style="position:absolute;white-space:pre;line-height:11px;font-size:11px;color:#222;top:286.29px;letter-spacing:0.402px;left:665.50px;transform-origin:0 50%;transform:scaleX(1.0700);width:54.49px;overflow:hidden;">07/01/2016</span>
<span style="position:absolute;white-space:pre;line-height:11px;font-size:11px;color:#222;top:312.29px;letter-spacing:0.000px;left:47.80px;transform-origin:0 50%;">4</span>
<span style="position:absolute;white-space:pre;line-height:11px;font-size:11px;color:#222;top:312.29px;letter-spacing:0.000px;left:66.20px;transform-origin:0 50%;transform:scaleX(1.0046);">RETIVA</span>
<span style="position:absolute;white-space:pre;line-height:11px;font-size:11px;color:#222;top:312.29px;letter-spacing:0.242px;left:152.80px;transform-origin:0 50%;transform:scaleX(1.0700);">0000000474</span>
<span style="position:absolute;white-space:pre;line-height:11px;font-size:11px;color:#222;top:312.29px;letter-spacing:0.000px;left:239.80px;transform-origin:0 50%;transform:scaleX(1.0084);">VEB</span>
<span style="position:absolute;white-space:pre;line-height:10px;font-size:10px;color:#222;top:311.54px;letter-spacing:0.000px;right:337.30px;transform-origin:100% 50%;transform:scaleX(1.0700);">8.225,78</span>
<span style="position:absolute;white-space:pre;line-height:10px;font-size:10px;color:#222;top:311.54px;letter-spacing:0.000px;right:230.60px;transform-origin:100% 50%;transform:scaleX(1.0700);">0,00</span>
<span style="position:absolute;white-space:pre;line-height:10px;font-size:10px;color:#222;top:311.54px;letter-spacing:0.000px;right:96.60px;transform-origin:100% 50%;transform:scaleX(1.0700);">8.225,78</span>
<span style="position:absolute;white-space:pre;line-height:11px;font-size:11px;color:#222;top:312.29px;letter-spacing:0.503px;left:665.50px;transform-origin:0 50%;transform:scaleX(1.0700);width:54.49px;overflow:hidden;">06/11/2012</span>
<span style="position:absolute;white-space:pre;line-height:12.5px;font-size:12.5px;color:#6b6b6b;top:382.82px;letter-spacing:0.000px;left:39.50px;transform-origin:0 50%;transform:scaleX(1.0536);">Documentos Pendientes</span>
<span style="position:absolute;white-space:pre;line-height:12.5px;font-size:12.5px;color:#6b6b6b;top:382.82px;letter-spacing:-0.000px;left:242.10px;transform-origin:0 50%;transform:scaleX(1.0445);">Cancelar Todos</span>
<span style="position:absolute;white-space:pre;line-height:11.5px;font-size:11.5px;color:#0d47a1;top:382.77px;letter-spacing:0.291px;left:418.80px;transform-origin:0 50%;transform:scaleX(1.0700);">Total Documentos:</span>
<span style="position:absolute;white-space:pre;line-height:11.5px;font-size:11.5px;color:#0d47a1;top:410.87px;letter-spacing:0.238px;left:418.80px;transform-origin:0 50%;transform:scaleX(1.0700);">Total Descuentos:</span>
<span style="position:absolute;white-space:pre;line-height:11.5px;font-size:11.5px;color:#0d47a1;top:434.87px;letter-spacing:0.223px;left:418.80px;transform-origin:0 50%;transform:scaleX(1.0700);">Total Retenciones:</span>
<span style="position:absolute;white-space:pre;line-height:11.5px;font-size:11.5px;color:#0d47a1;top:458.87px;letter-spacing:0.371px;left:418.80px;transform-origin:0 50%;transform:scaleX(1.0700);">Total Neto:</span>
<span style="position:absolute;white-space:pre;line-height:10px;font-size:10px;color:#2b2b2b;top:383.54px;letter-spacing:0.000px;right:97.50px;transform-origin:100% 50%;transform:scaleX(1.0700);">0,00</span>
<span style="position:absolute;white-space:pre;line-height:10px;font-size:10px;color:#2b2b2b;top:411.54px;letter-spacing:0.000px;right:97.50px;transform-origin:100% 50%;transform:scaleX(1.0700);">5.781,25</span>
<span style="position:absolute;white-space:pre;line-height:10px;font-size:10px;color:#2b2b2b;top:435.54px;letter-spacing:0.000px;right:97.50px;transform-origin:100% 50%;transform:scaleX(1.0700);">83.762,32</span>
<span style="position:absolute;white-space:pre;line-height:10px;font-size:10px;color:#2b2b2b;top:459.54px;letter-spacing:0.000px;right:97.50px;transform-origin:100% 50%;transform:scaleX(1.0700);">537.704,10</span>
<span style="position:absolute;white-space:pre;line-height:11.3px;font-size:11.3px;color:#fff;top:505.83px;font-weight:bold;letter-spacing:0.000px;left:21.20px;transform-origin:0 50%;transform:scaleX(1.1211);">Descuentos</span>
<span style="position:absolute;white-space:pre;line-height:10px;font-size:10px;color:#fff;top:538.63px;font-weight:bold;letter-spacing:0.000px;left:20.50px;transform-origin:0 50%;transform:scaleX(1.0067);">1</span>
<span style="position:absolute;white-space:pre;line-height:10px;font-size:10px;color:#fff;top:538.63px;font-weight:bold;letter-spacing:0.715px;left:42.80px;transform-origin:0 50%;transform:scaleX(1.1800);">N°</span>
<span style="position:absolute;white-space:pre;line-height:10px;font-size:10px;color:#fff;top:538.63px;font-weight:bold;letter-spacing:0.406px;left:82.30px;transform-origin:0 50%;transform:scaleX(1.1800);">Tipo/Origen</span>
<span style="position:absolute;white-space:pre;line-height:10px;font-size:10px;color:#fff;top:538.63px;font-weight:bold;letter-spacing:0.346px;left:178.70px;transform-origin:0 50%;transform:scaleX(1.1800);">Número/Origen</span>
<span style="position:absolute;white-space:pre;line-height:10px;font-size:10px;color:#fff;top:538.63px;font-weight:bold;letter-spacing:0.000px;left:297.80px;transform-origin:0 50%;transform:scaleX(1.1681);">Monto Base</span>
<span style="position:absolute;white-space:pre;line-height:10px;font-size:10px;color:#fff;top:533.33px;font-weight:bold;letter-spacing:0.000px;left:417.80px;transform-origin:0 50%;transform:scaleX(1.1565);">%</span>
<span style="position:absolute;white-space:pre;line-height:10px;font-size:10px;color:#fff;top:544.74px;font-weight:bold;letter-spacing:0.421px;left:390.20px;transform-origin:0 50%;transform:scaleX(1.1800);">Descuento</span>
<span style="position:absolute;white-space:pre;line-height:11px;font-size:11px;color:#fff;top:537.99px;font-weight:bold;letter-spacing:1.516px;left:494.80px;transform-origin:0 50%;transform:scaleX(1.1800);">-&gt;</span>
<span style="position:absolute;white-space:pre;line-height:10px;font-size:10px;color:#fff;top:533.74px;font-weight:bold;letter-spacing:0.127px;left:548.00px;transform-origin:0 50%;transform:scaleX(1.1800);">Monto</span>
<span style="position:absolute;white-space:pre;line-height:10px;font-size:10px;color:#fff;top:545.13px;font-weight:bold;letter-spacing:0.421px;left:534.20px;transform-origin:0 50%;transform:scaleX(1.1800);">Descuento</span>
<span style="position:absolute;white-space:pre;line-height:10px;font-size:10px;color:#fff;top:538.63px;font-weight:bold;letter-spacing:0.069px;left:640.20px;transform-origin:0 50%;transform:scaleX(1.1800);">Comentario</span>
<span style="position:absolute;white-space:pre;line-height:13px;font-size:13px;color:#0d47a1;top:575.70px;letter-spacing:0.000px;left:32.30px;transform-origin:0 50%;transform:scaleX(1.0249);">Agregar</span>
<span style="position:absolute;white-space:pre;line-height:13px;font-size:13px;color:#777;top:575.70px;letter-spacing:0.000px;left:126.60px;transform-origin:0 50%;transform:scaleX(1.0392);">Editar</span>
<span style="position:absolute;white-space:pre;line-height:13px;font-size:13px;color:#0d47a1;top:575.70px;letter-spacing:0.000px;left:221.60px;transform-origin:0 50%;">Buscar</span>
<span style="position:absolute;white-space:pre;line-height:13px;font-size:13px;color:#777;top:575.70px;letter-spacing:-0.000px;left:316.50px;transform-origin:0 50%;transform:scaleX(1.0411);">Eliminar</span>
<span style="position:absolute;white-space:pre;line-height:13px;font-size:13px;color:#0d47a1;top:575.70px;letter-spacing:0.344px;left:411.70px;transform-origin:0 50%;transform:scaleX(1.0700);">Imprimir</span>
<span style="position:absolute;white-space:pre;line-height:13px;font-size:13px;color:#6b6b6b;top:575.70px;letter-spacing:0.000px;left:571.80px;transform-origin:0 50%;transform:scaleX(1.0220);">Aceptar</span>
<span style="position:absolute;white-space:pre;line-height:13px;font-size:13px;color:#6b6b6b;top:575.70px;letter-spacing:-0.000px;left:666.80px;transform-origin:0 50%;transform:scaleX(1.0052);">Cancelar</span>
<!-- overlays: clip below grid, vertical scrollbar, inner box border -->
<div class="a" style="left:8px;top:547px;width:738px;height:6px;background:#fff;border-radius:0 0 4px 4px;"></div>
<div class="a" style="left:8px;top:554px;width:738px;height:12px;background:#fff;"></div>
<div class="a" style="left:724px;top:63px;width:17px;height:484px;background:#f1f1f1;"></div>
<div class="a" style="left:726px;top:80px;width:13px;height:148px;background:#c1c1c1;"></div>
<div class="a" style="left:741px;top:59px;width:5px;height:494px;background:#fff;"></div>
<svg style="left:724px;top:63px" width="17" height="17" viewBox="0 0 17 17"><path d="M4.5 11 L8.5 7 L12.5 11 Z" fill="#a3a3a3"/></svg>
<svg style="left:724px;top:530px" width="17" height="17" viewBox="0 0 17 17"><path d="M4.5 6 L8.5 10 L12.5 6 Z" fill="#505050"/></svg>
<div class="a" style="left:7px;top:36px;width:740px;height:518px;border:1px solid #9e9e9e;border-radius:5px;"></div>

</body></html>
